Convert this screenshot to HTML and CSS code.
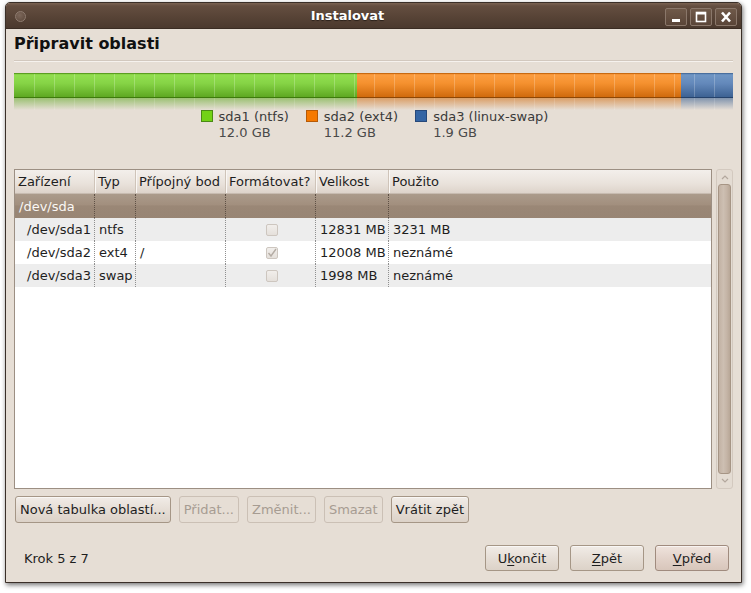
FILE: index.html
```html
<!DOCTYPE html>
<html>
<head>
<meta charset="utf-8">
<link rel="stylesheet" href="styles.css">
</head>
<body>
<div class="window">
  <div class="titlebar">
    <span class="tb-menu"></span>
    <span class="tb-title">Instalovat</span>
    <div class="tb-buttons">
      <span class="tb-btn"><svg width="20" height="16" viewBox="0 0 20 16"><rect x="6" y="10" width="8" height="3" fill="#fff"/></svg></span>
      <span class="tb-btn"><svg width="20" height="16" viewBox="0 0 20 16"><rect x="5.5" y="3.5" width="9" height="9" fill="none" stroke="#fff" stroke-width="1.6"/><rect x="5" y="3" width="10" height="2.5" fill="#fff"/></svg></span>
      <span class="tb-btn"><svg width="20" height="16" viewBox="0 0 20 16"><path d="M6 3.5 L14 12.5 M14 3.5 L6 12.5" stroke="#fff" stroke-width="2.6" fill="none"/></svg></span>
    </div>
  </div>
  <div class="content">
    <h1 class="heading">Připravit oblasti</h1>
    <div class="separator"></div>

    <div class="pbar">
      <div class="seg seg-green"></div>
      <div class="seg seg-orange"></div>
      <div class="seg seg-blue"></div>
      <div class="pbar-lines"></div>
    </div>
    <div class="pbar refl">
      <div class="seg rseg-green"></div>
      <div class="seg rseg-orange"></div>
      <div class="seg rseg-blue"></div>
      <div class="pbar-lines rlines"></div>
    </div>

    <div class="legend">
      <div class="leg-item">
        <span class="sq sq-green"></span>
        <div class="leg-text"><div>sda1 (ntfs)</div><div class="leg-size">12.0 GB</div></div>
      </div>
      <div class="leg-item">
        <span class="sq sq-orange"></span>
        <div class="leg-text"><div>sda2 (ext4)</div><div class="leg-size">11.2 GB</div></div>
      </div>
      <div class="leg-item">
        <span class="sq sq-blue"></span>
        <div class="leg-text"><div>sda3 (linux-swap)</div><div class="leg-size">1.9 GB</div></div>
      </div>
    </div>

    <div class="table-area">
      <div class="tree">
        <div class="row head">
          <div class="c c1">Zařízení</div>
          <div class="c c2">Typ</div>
          <div class="c c3">Přípojný bod</div>
          <div class="c c4h">Formátovat?</div>
          <div class="c c5">Velikost</div>
          <div class="c c6">Použito</div>
        </div>
        <div class="row disk">
          <div class="c c1">/dev/sda</div>
          <div class="c c2"></div>
          <div class="c c3"></div>
          <div class="c c4"></div>
          <div class="c c5"></div>
          <div class="c c6"></div>
        </div>
        <div class="row odd">
          <div class="c c1 ind">/dev/sda1</div>
          <div class="c c2">ntfs</div>
          <div class="c c3"></div>
          <div class="c c4"><span class="chk"></span></div>
          <div class="c c5">12831 MB</div>
          <div class="c c6">3231 MB</div>
        </div>
        <div class="row even">
          <div class="c c1 ind">/dev/sda2</div>
          <div class="c c2">ext4</div>
          <div class="c c3">/</div>
          <div class="c c4"><span class="chk"><svg width="10" height="10" viewBox="0 0 10 10"><path d="M1.5 5 L4 8 L9 1" stroke="#b4aca4" stroke-width="1.4" fill="none"/></svg></span></div>
          <div class="c c5">12008 MB</div>
          <div class="c c6">neznámé</div>
        </div>
        <div class="row odd">
          <div class="c c1 ind">/dev/sda3</div>
          <div class="c c2">swap</div>
          <div class="c c3"></div>
          <div class="c c4"><span class="chk"></span></div>
          <div class="c c5">1998 MB</div>
          <div class="c c6">neznámé</div>
        </div>
      </div>
      <div class="scrollbar">
        <div class="sb-arrow"><svg width="10" height="6" viewBox="0 0 10 6"><path d="M2 5 L5 2 L8 5" stroke="#b3a89e" stroke-width="1.2" fill="none"/></svg></div>
        <div class="sb-thumb"></div>
        <div class="sb-arrow"><svg width="10" height="6" viewBox="0 0 10 6"><path d="M2 1 L5 4 L8 1" stroke="#b3a89e" stroke-width="1.2" fill="none"/></svg></div>
      </div>
    </div>

    <div class="actions">
      <button class="btn">Nová tabulka oblastí...</button>
      <button class="btn dis">Přidat...</button>
      <button class="btn dis">Změnit...</button>
      <button class="btn dis">Smazat</button>
      <button class="btn">Vrátit zpět</button>
    </div>

    <div class="footer">
      <span class="step">Krok 5 z 7</span>
      <div class="nav">
        <button class="btn nbtn">U<u>k</u>ončit</button>
        <button class="btn nbtn"><u>Z</u>pět</button>
        <button class="btn nbtn def"><u>V</u>před</button>
      </div>
    </div>
  </div>
</div>
</body>
</html>
```

FILE: styles.css
```css
* { box-sizing: border-box; }
html, body { margin: 0; padding: 0; background: #ffffff; }
body {
  font-family: "DejaVu Sans", "Liberation Sans", sans-serif;
  font-size: 13px;
  color: #1e1e1e;
  width: 751px;
  height: 593px;
  overflow: hidden;
}
.window {
  margin: 2px 0 0 5px;
  width: 737px;
  height: 581px;
  border: 1px solid #3a2f28;
  border-radius: 5px 5px 0 0;
  background: #e6ded5;
  box-shadow: 1px 2px 5px rgba(0,0,0,0.55);
  display: flex;
  flex-direction: column;
  overflow: hidden;
}
.titlebar {
  height: 26px;
  flex: none;
  background: linear-gradient(#7a6252 0px, #644e40 3px, #574336 14px, #4b392e 100%);
  border-bottom: 1px solid #3a2c23;
  display: flex;
  align-items: center;
  position: relative;
}
.tb-menu {
  width: 11px;
  height: 11px;
  border-radius: 50%;
  border: 1px solid #8f7c70;
  background: radial-gradient(circle at 40% 35%, #7d685b, #5a4639);
  margin-left: 9px;
  margin-top: 1px;
}
.tb-title {
  flex: 1;
  text-align: center;
  color: #ffffff;
  font-weight: bold;
  font-size: 13px;
  text-shadow: 0 1px 1px rgba(0,0,0,0.5);
  margin-left: 4px;
}
.tb-buttons {
  display: flex;
  gap: 3px;
  margin-right: 4px;
  margin-top: 2px;
}
.tb-btn {
  width: 22px;
  height: 18px;
  border: 1px solid #8a776a;
  border-radius: 2px;
  background: linear-gradient(#6f5949, #5a4538);
  display: flex;
  align-items: center;
  justify-content: center;
}
.content {
  flex: 1;
  padding: 0 8px;
  display: flex;
  flex-direction: column;
}
.heading {
  margin: 5px 0 0 0;
  font-size: 16px;
  font-weight: bold;
  line-height: 20px;
  color: #111;
}
.separator {
  margin-top: 6px;
  height: 2px;
  border-top: 1px solid #d2c8be;
  border-bottom: 1px solid #f6f2ee;
}
.pbar {
  margin-top: 11px;
  height: 25px;
  display: flex;
  position: relative;
}
.seg-green { width: 343px; background: linear-gradient(#7fc83c 0, #91de4f 1px, #86d446 40%, #5ea822 100%); border-top: 1px solid #5a9e22; border-bottom: 1px solid #3e7a0c; }
.seg-orange { width: 324px; background: linear-gradient(#ee8a2c 0, #fb9d40 1px, #f5912f 40%, #d06a0c 100%); border-top: 1px solid #c86a12; border-bottom: 1px solid #8e4604; }
.seg-blue { flex: 1; background: linear-gradient(#5d85b6 0, #7096c4 1px, #6489bb 40%, #3d6293 100%); border-top: 1px solid #4a6f9e; border-bottom: 1px solid #25426b; }
.pbar-lines {
  position: absolute;
  left: 0; top: 1px; right: 0; bottom: 1px;
  background: repeating-linear-gradient(90deg, transparent 0, transparent 19px, rgba(255,255,255,0.22) 19px, rgba(255,255,255,0.22) 20px);
  background-position: 1px 0;
}
.pbar.refl { margin-top: 0; height: 12px; }
.rseg-green { width: 343px; background: linear-gradient(rgba(94,168,34,0.55), rgba(140,200,90,0)); }
.rseg-orange { width: 324px; background: linear-gradient(rgba(208,106,12,0.55), rgba(230,160,90,0)); }
.rseg-blue { flex: 1; background: linear-gradient(rgba(61,98,147,0.6), rgba(100,130,170,0)); }
.rlines { top: 0; bottom: 0; opacity: 0.6; }
.legend {
  display: flex;
  justify-content: center;
  gap: 17px;
  margin-top: -1px;
  padding-left: 2px;
  color: #3a3a3a;
}
.leg-item { display: flex; gap: 6px; align-items: flex-start; }
.sq {
  width: 12px;
  height: 12px;
  margin-top: 1px;
  border: 1px solid;
}
.sq-green { background: #73d216; border-color: #4a8a14; }
.sq-orange { background: #f57900; border-color: #b65a06; }
.sq-blue { background: #3465a4; border-color: #27497a; }
.leg-text { line-height: 16px; }
.leg-size { color: #4a4a4a; }
.table-area {
  margin-top: 28px;
  height: 320px;
  display: flex;
  gap: 4px;
}
.tree {
  flex: 1;
  background: #ffffff;
  border: 1px solid #9c8f83;
}
.row {
  display: grid;
  grid-template-columns: 79px 41px 90px 90px 73px 1fr;
  height: 23px;
  align-items: stretch;
}
.c {
  padding-left: 4px;
  display: flex;
  align-items: center;
  white-space: nowrap;
  overflow: hidden;
}
.row .c + .c { border-left: 1px dotted #8f8f8f; }
.row.head {
  height: 24px;
  background: linear-gradient(#f3efeb, #e9e2db 60%, #ddd3ca);
  border-bottom: 1px solid #c7bbb0;
}
.row.head .c { padding-left: 3px; }
.row.head .c + .c { border-left: 1px solid #cfc4b9; box-shadow: inset 1px 0 0 #faf7f4; }
.row.disk {
  height: 24px;
  background: linear-gradient(#ab9b8b, #a28f7e 45%, #9a8776 50%, #988574);
  color: #fbf8f5;
}
.row.disk .c + .c { border-left-color: #5e5045; }
.row.odd { background: #ededed; }
.row.even { background: #ffffff; }
.c.ind { padding-left: 12px; }
.c4 { justify-content: center; padding-left: 0; }
.chk {
  width: 12px;
  height: 12px;
  border: 1px solid #cdc6bf;
  border-radius: 2px;
  background: linear-gradient(#f1eeeb, #e5e0db);
  display: flex;
  align-items: center;
  justify-content: center;
  margin-left: 3px;
}
.scrollbar {
  width: 17px;
  border: 1px solid #d3c9bf;
  border-radius: 3px;
  background: #e4dcd3;
  display: flex;
  flex-direction: column;
  padding: 0 1px;
}
.sb-arrow {
  height: 14px;
  display: flex;
  align-items: center;
  justify-content: center;
  flex: none;
}
.sb-thumb {
  flex: 1;
  border: 1px solid #a69585;
  border-radius: 3px;
  background: linear-gradient(90deg, #c2b2a4, #cdbfb2 40%, #c5b5a7 70%, #b8a797);
}
.actions {
  margin-top: 7px;
  display: flex;
  gap: 8px;
  padding-left: 1px;
}
.btn {
  font-family: "DejaVu Sans", "Liberation Sans", sans-serif;
  font-size: 13px;
  color: #1e1e1e;
  height: 27px;
  padding: 0 4px;
  border: 1px solid #a59686;
  border-radius: 3px;
  background: linear-gradient(#f1ece7, #e6ded6 50%, #dcd2c8);
  box-shadow: inset 0 1px 0 rgba(255,255,255,0.6);
}
.btn.dis {
  color: #a69c92;
  border-color: #cbc0b5;
  background: #e6ded5;
  box-shadow: none;
}
.footer {
  margin-top: 22px;
  display: flex;
  align-items: center;
  justify-content: space-between;
  padding-left: 10px;
  padding-right: 4px;
}
.nav { display: flex; gap: 11px; }
.nbtn { width: 74px; height: 26px; padding: 0; }
.nbtn u { text-underline-offset: 2px; }
.def { background: linear-gradient(#efe3dc, #e3d3ca 50%, #d8c6bb); border-color: #a08b7e; }
.step { color: #1e1e1e; }
```
